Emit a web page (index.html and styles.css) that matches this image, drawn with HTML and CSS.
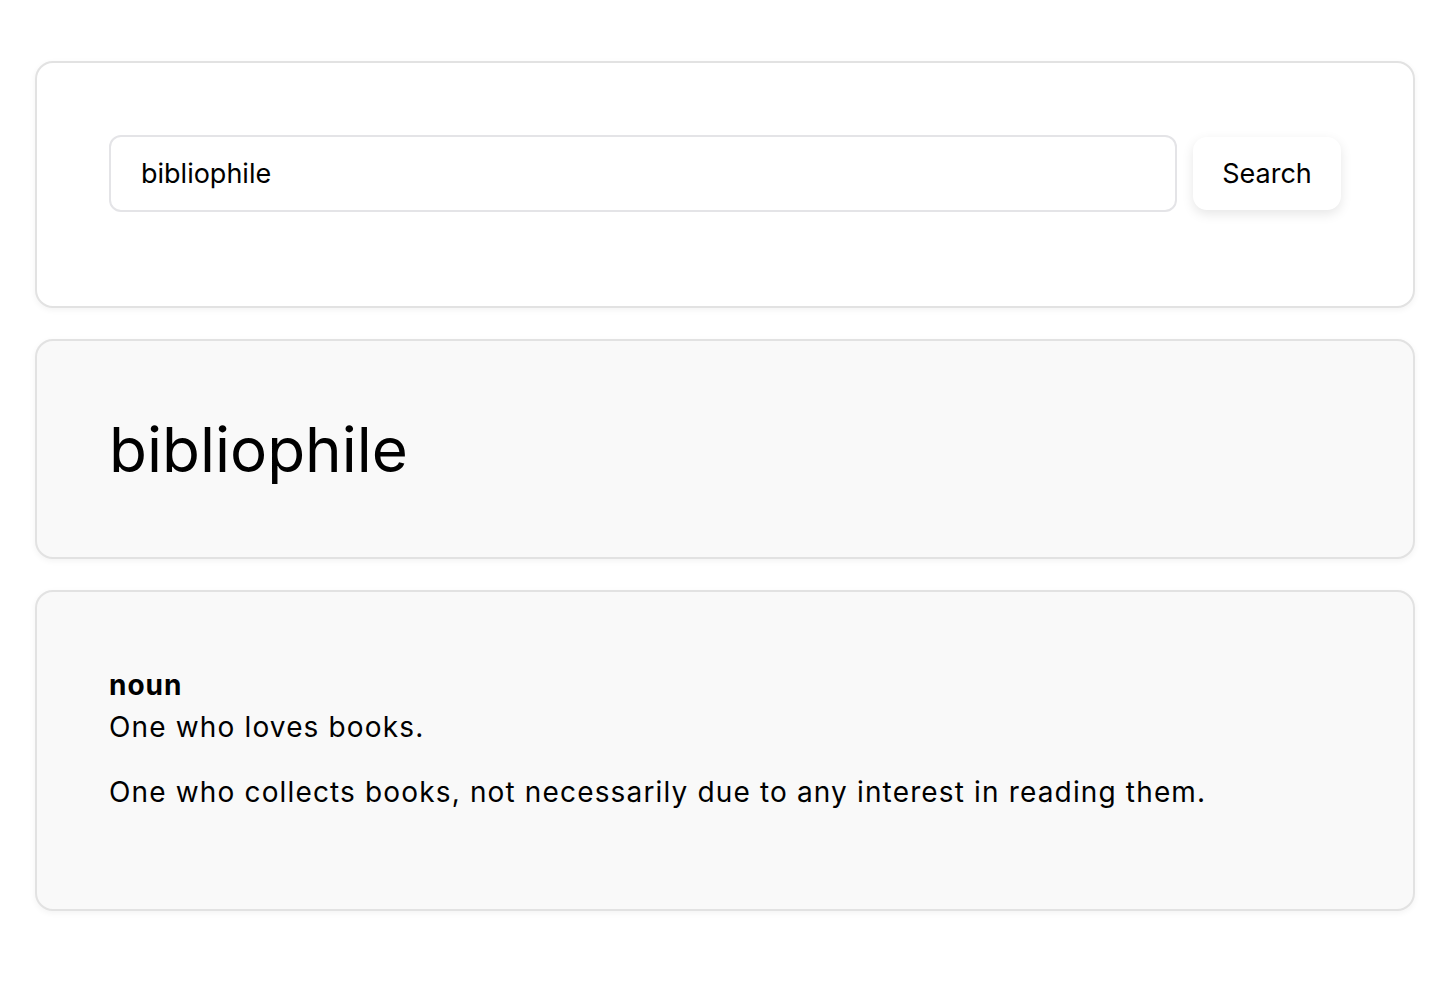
FILE: index.html
```html
<!DOCTYPE html>
<html lang="en">
<head>
<meta charset="utf-8">
<title>Dictionary</title>
<link rel="stylesheet" href="styles.css">
</head>
<body>
<main class="page">
  <section class="card card-search">
    <form class="search-form">
      <input class="search-input" type="text" value="bibliophile">
      <button class="search-button" type="button">Search</button>
    </form>
  </section>
  <section class="card card-muted card-word">
    <h1 class="word">bibliophile</h1>
  </section>
  <section class="card card-muted card-defs">
    <div class="pos">noun</div>
    <p class="def">One who loves books.</p>
    <p class="def">One who collects books, not necessarily due to any interest in reading them.</p>
  </section>
</main>
</body>
</html>
```
FILE: styles.css
```css
* { box-sizing: border-box; }
html, body { margin: 0; padding: 0; background: #ffffff; }
body {
  font-family: Inter, "Noto Sans", "Liberation Sans", sans-serif;
  color: #000;
}
.page {
  padding: 61px 29px 40px 35px;
  display: flex;
  flex-direction: column;
  gap: 31px;
}
.card {
  border: 2px solid #e2e2e2;
  border-radius: 18px;
  background: #fff;
  box-shadow: 0 2px 6px rgba(0,0,0,0.05);
}
.card-muted { background: #f9f9f9; }
.card-search { padding: 72px 72px 94px 72px; height: 247px; }
.search-form {
  display: flex;
  align-items: center;
  gap: 16px;
}
.search-input {
  flex: 1;
  height: 77px;
  border: 2px solid #e4e4e7;
  border-radius: 12px;
  padding: 0 30px;
  font-family: inherit;
  font-size: 27px;
  color: #000;
  background: #fff;
  outline: none;
}
.search-button {
  width: 148px;
  height: 73px;
  border: none;
  border-radius: 14px;
  background: #fff;
  box-shadow: 0 4px 12px rgba(0,0,0,0.10);
  font-family: inherit;
  font-size: 27px;
  color: #000;
}
.card-word { height: 220px; padding: 0 72px; display: flex; align-items: center; }
.word {
  margin: 0;
  font-size: 62px;
  font-weight: 400;
}
.card-defs { height: 321px; padding: 62px 72px; }
.pos { font-weight: 700; font-size: 28px; letter-spacing: 1px; margin-top: 10px; line-height: 1.5; }
.def { margin: 0 0 22px; font-size: 28px; letter-spacing: 1.15px; line-height: 1.55; }
```
